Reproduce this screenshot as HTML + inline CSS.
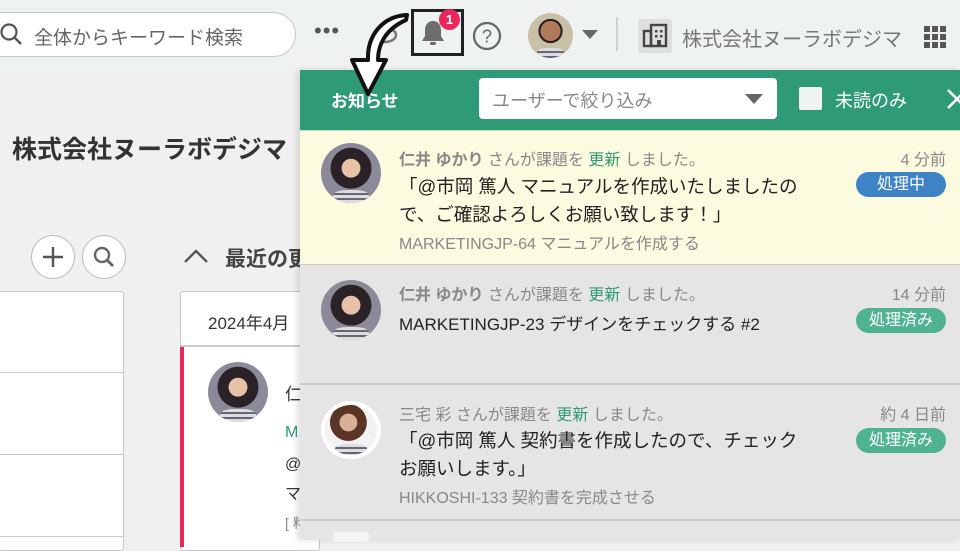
<!DOCTYPE html>
<html><head><meta charset="utf-8"><style>
*{margin:0;padding:0;box-sizing:border-box}
body{width:960px;height:540px;overflow:hidden;position:relative;background:#f0f0f0;font-family:"Liberation Sans","Noto Sans CJK JP",sans-serif;color:#333}
.a{position:absolute}
.hdr{left:0;top:0;width:960px;height:70px;background:#eef2f0}
.t{position:absolute;white-space:nowrap}
.av{position:absolute;border-radius:50%;background:radial-gradient(circle at 50% 42%,#e8c2a8 0 20%,#2a2226 21% 44%,#8c8a98 45%);overflow:hidden}
.av::after{content:"";position:absolute;left:20%;right:20%;bottom:0;height:22%;background:repeating-linear-gradient(#ddd 0 3px,#667 3px 5px);border-radius:40% 40% 0 0}
.badge{position:absolute;color:#fff;font-size:15px;text-align:center;border-radius:13px;height:25px;line-height:25px}
.g{color:#888}
.gr{color:#2f9a74}
</style></head><body>
<div class="a hdr"></div>
<div class="a" style="left:-20px;top:12px;width:316px;height:45px;background:#fff;border:1px solid #c8c8c8;border-radius:23px"></div>
<svg class="a" style="left:0;top:23px" width="24" height="24"><circle cx="9" cy="9" r="7.5" fill="none" stroke="#555" stroke-width="2.2"/><line x1="14.5" y1="14.5" x2="21" y2="21" stroke="#555" stroke-width="2.5"/></svg>
<div class="t" style="left:34px;top:23px;font-size:19px;color:#666">全体からキーワード検索</div>
<div class="t" style="left:314px;top:18px;font-size:22px;color:#555;letter-spacing:1px">•••</div>
<svg class="a" style="left:372px;top:22px" width="26" height="26"><ellipse cx="13" cy="13" rx="11" ry="7" fill="none" stroke="#777" stroke-width="2.5"/><circle cx="13" cy="13" r="3" fill="#777"/></svg>
<div class="a" style="left:411px;top:9px;width:53px;height:47px;border:3px solid #222"></div>
<svg class="a" style="left:418px;top:18px" width="30" height="30"><path d="M15 3c-5 0-8 4-8 9v6l-3 5h22l-3-5v-6c0-5-3-9-8-9z" fill="#6d6d6d"/><rect x="12" y="24" width="6" height="3" rx="1.5" fill="#6d6d6d"/></svg>
<div class="a" style="left:439px;top:9px;width:21px;height:21px;border-radius:50%;background:#e8285a;color:#fff;font-size:13px;font-weight:bold;text-align:center;line-height:21px">1</div>
<svg class="a" style="left:471px;top:20px" width="32" height="32"><circle cx="16" cy="16" r="13" fill="none" stroke="#666" stroke-width="2.2"/><text x="16" y="22.5" text-anchor="middle" font-size="18" fill="#666" font-family="Liberation Sans">?</text></svg>
<div class="av" style="left:528px;top:13px;width:45px;height:45px;background:radial-gradient(circle at 50% 40%,#b07a5a 0 28%,#2a2020 29% 34%,#c9c0a8 35%)"></div>
<svg class="a" style="left:582px;top:30px" width="16" height="10"><path d="M0 0h16L8 9z" fill="#666"/></svg>
<div class="a" style="left:616px;top:17px;width:2px;height:34px;background:#d0d0d0"></div>
<div class="a" style="left:638px;top:19px;width:34px;height:34px;background:#dde0de;border-radius:3px"></div>
<svg class="a" style="left:642px;top:22px" width="28" height="28"><rect x="2" y="9" width="7" height="15" fill="none" stroke="#444" stroke-width="2.4"/><rect x="9" y="3" width="15" height="21" fill="none" stroke="#444" stroke-width="2.4"/><rect x="13" y="8" width="2.5" height="2.5" fill="#444"/><rect x="18" y="8" width="2.5" height="2.5" fill="#444"/><rect x="13" y="13" width="2.5" height="2.5" fill="#444"/><rect x="18" y="13" width="2.5" height="2.5" fill="#444"/><rect x="15" y="18" width="4" height="6" fill="#444"/></svg>
<div class="t" style="left:682px;top:23px;font-size:20px;color:#777">株式会社ヌーラボデジマ</div>
<svg class="a" style="left:924px;top:26px" width="24" height="24" fill="#555"><rect x="0" y="0" width="6" height="6"/><rect x="8" y="0" width="6" height="6"/><rect x="16" y="0" width="6" height="6"/><rect x="0" y="8" width="6" height="6"/><rect x="8" y="8" width="6" height="6"/><rect x="16" y="8" width="6" height="6"/><rect x="0" y="16" width="6" height="6"/><rect x="8" y="16" width="6" height="6"/><rect x="16" y="16" width="6" height="6"/></svg>

<div class="t" style="left:12px;top:130px;font-size:25px;font-weight:bold;color:#333">株式会社ヌーラボデジマ</div>
<div class="a" style="left:31px;top:235px;width:44px;height:44px;border-radius:50%;background:#fff;border:1px solid #bbb"></div>
<svg class="a" style="left:41px;top:245px" width="24" height="24"><path d="M12 2v20M2 12h20" stroke="#555" stroke-width="2.4"/></svg>
<div class="a" style="left:82px;top:235px;width:44px;height:44px;border-radius:50%;background:#fff;border:1px solid #bbb"></div>
<svg class="a" style="left:92px;top:245px" width="24" height="24"><circle cx="10" cy="10" r="7" fill="none" stroke="#666" stroke-width="2.4"/><line x1="15" y1="15" x2="21" y2="21" stroke="#666" stroke-width="2.8"/></svg>
<div class="a" style="left:-2px;top:291px;width:126px;height:260px;background:#fff;border:1px solid #c8c8c8;border-radius:3px"></div>
<div class="a" style="left:0;top:372px;width:123px;height:1px;background:#c8c8c8"></div>
<div class="a" style="left:0;top:454px;width:123px;height:1px;background:#c8c8c8"></div>
<div class="a" style="left:0;top:536px;width:123px;height:1px;background:#c8c8c8"></div>
<svg class="a" style="left:183px;top:248px" width="28" height="16"><path d="M2 14L13 3l11 11" fill="none" stroke="#555" stroke-width="2.4"/></svg>
<div class="t" style="left:225px;top:243px;font-size:21px;font-weight:bold;color:#444">最近の更新</div>
<div class="a" style="left:180px;top:291px;width:140px;height:260px;background:#fff;border:1px solid #c8c8c8;border-radius:3px"></div>
<div class="t" style="left:208px;top:309px;font-size:17px;color:#333">2024年4月</div>
<div class="a" style="left:180px;top:345px;width:130px;height:2px;background:#ccc"></div>
<div class="a" style="left:180px;top:347px;width:4px;height:200px;background:#e8285a"></div>
<div class="av" style="left:208px;top:362px;width:60px;height:60px"></div>
<div class="t" style="left:285px;top:380px;font-size:17px">仁</div>
<div class="t gr" style="left:285px;top:424px;font-size:16px">M</div>
<div class="t" style="left:285px;top:456px;font-size:16px">@</div>
<div class="t" style="left:285px;top:480px;font-size:16px">マ</div>
<div class="t g" style="left:285px;top:513px;font-size:14px">[ 料</div>

<div class="a" style="left:300px;top:70px;width:660px;height:470px;background:#e5e5e5;box-shadow:-3px 0 6px rgba(0,0,0,.12)"></div>
<div class="a" style="left:300px;top:70px;width:660px;height:60px;background:#2e9a76"></div>
<div class="t" style="left:331px;top:87px;font-size:17px;font-weight:bold;color:#fff">お知らせ</div>
<div class="a" style="left:479px;top:78px;width:298px;height:41px;background:#fff;border-radius:4px"></div>
<div class="t" style="left:492px;top:87px;font-size:18px;color:#888">ユーザーで絞り込み</div>
<svg class="a" style="left:745px;top:94px" width="18" height="11"><path d="M0 0h18L9 10z" fill="#666"/></svg>
<div class="a" style="left:799px;top:87px;width:23px;height:23px;background:#eef2f0;border-radius:2px"></div>
<div class="t" style="left:835px;top:87px;font-size:18px;color:#fff">未読のみ</div>
<svg class="a" style="left:946px;top:88px" width="20" height="22"><path d="M2 2l18 18M2 20L20 2" stroke="#fff" stroke-width="2.6"/></svg>

<div class="a" style="left:300px;top:130px;width:660px;height:135px;background:#fdfbdf;border-top:1px solid #bfe5cf;border-bottom:1px solid #ccc"></div>
<div class="av" style="left:321px;top:143px;width:60px;height:60px"></div>
<div class="t" style="left:399px;top:146px;font-size:16px"><b class="g">仁井 ゆかり</b> <span class="g">さんが課題を</span> <span class="gr">更新</span> <span class="g">しました。</span></div>
<div class="t" style="left:399px;top:173px;font-size:18.5px;line-height:28px;color:#222">「@市岡 篤人 マニュアルを作成いたしましたの<br>で、ご確認よろしくお願い致します！」</div>
<div class="t g" style="left:399px;top:230px;font-size:16px">MARKETINGJP-64 マニュアルを作成する</div>
<div class="t g" style="right:14px;top:146px;font-size:16px">4 分前</div>
<div class="badge" style="left:856px;top:172px;width:90px;background:#3d83c6;font-size:16px">処理中</div>

<div class="a" style="left:300px;top:266px;width:660px;height:119px;border-bottom:2px solid #ccc"></div>
<div class="av" style="left:321px;top:280px;width:60px;height:60px"></div>
<div class="t" style="left:399px;top:281px;font-size:16px"><b class="g">仁井 ゆかり</b> <span class="g">さんが課題を</span> <span class="gr">更新</span> <span class="g">しました。</span></div>
<div class="t" style="left:399px;top:310px;font-size:17px;color:#222">MARKETINGJP-23 デザインをチェックする #2</div>
<div class="t g" style="right:14px;top:281px;font-size:16px">14 分前</div>
<div class="badge" style="left:856px;top:308px;width:90px;background:#4fb392;font-size:16px">処理済み</div>

<div class="a" style="left:300px;top:386px;width:660px;height:135px;border-bottom:2px solid #ccc"></div>
<div class="a" style="left:321px;top:401px;width:60px;height:58px;border-radius:50%;background:#fff"></div>
<div class="av" style="left:325px;top:405px;width:52px;height:50px;background:radial-gradient(circle at 45% 35%,#d8b098 0 20%,#5a3424 21% 42%,#f2f2f2 43%)"></div>
<div class="t" style="left:399px;top:401px;font-size:16px"><span class="g">三宅 彩 さんが課題を</span> <span class="gr">更新</span> <span class="g">しました。</span></div>
<div class="t" style="left:399px;top:427px;font-size:18.5px;line-height:28px;color:#222">「@市岡 篤人 契約書を作成したので、チェック<br>お願いします。」</div>
<div class="t g" style="left:399px;top:484px;font-size:16px">HIKKOSHI-133 契約書を完成させる</div>
<div class="t g" style="right:14px;top:401px;font-size:16px">約 4 日前</div>
<div class="badge" style="left:856px;top:428px;width:90px;background:#4fb392;font-size:16px">処理済み</div>
<div class="a" style="left:333px;top:532px;width:36px;height:10px;background:#f4f4f4;border-radius:4px"></div>

<svg class="a" style="left:340px;top:8px" width="80" height="92"><path d="M67 7C44 8 27 26 28 52L12 52L28 86L46 52L38 52C38 34 48 20 66 12Z" fill="#fff" stroke="#111" stroke-width="4" stroke-linejoin="round"/></svg>
</body></html>
